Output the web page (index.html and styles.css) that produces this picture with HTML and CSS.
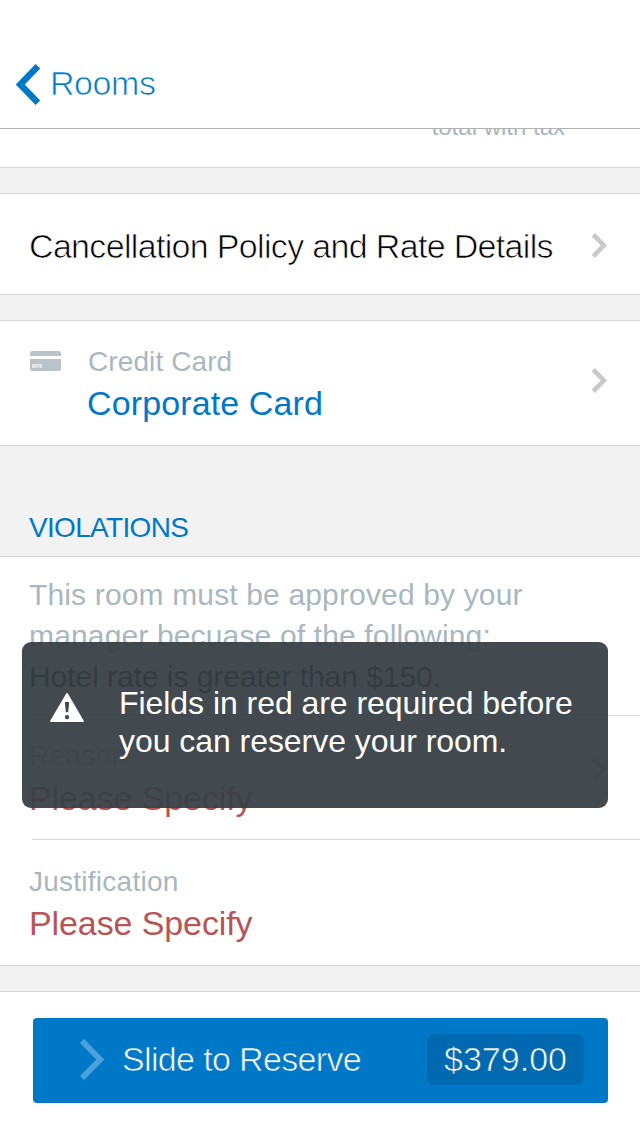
FILE: index.html
```html
<!DOCTYPE html>
<html lang="en">
<head>
<meta charset="utf-8">
<title>Reserve Room</title>
<link rel="stylesheet" href="styles.css">
</head>
<body>
<div class="screen">
  <header class="nav">
    <svg class="back" viewBox="0 0 24 41"><path d="M21.900 2.300 4.300 20.500 21.900 38.700" fill="none" stroke="#0078c8" stroke-width="6.400"/></svg>
    <span class="nav-title light">Rooms</span>
  </header>
  <section class="summary"><span>total with tax</span></section>
  <section class="card policy">
    <span class="policy-text light">Cancellation Policy and Rate Details</span>
    <svg class="chevron" viewBox="0 0 16 25"><path d="M1.300 1.700 11.900 12.500 1.300 23.300" fill="none" stroke="#c9c9c9" stroke-width="4.600"/></svg>
  </section>
  <section class="card payment">
    <svg class="cc" viewBox="0 0 31 20"><path d="M0 5V2.500Q0 0 2.500 0h26Q31 0 31 2.500V5zM0 8h31v9.500q0 2.500-2.500 2.500h-26Q0 20 0 17.500z" fill="#bac3ca"/><path d="M2 13h10v4H9.500v-1.500h-1V17h-1v-1.500h-1V17H2z" fill="#e2e6e9"/></svg>
    <div class="field">
      <div class="label">Credit Card</div>
      <div class="value link">Corporate Card</div>
    </div>
    <svg class="chevron" viewBox="0 0 16 25"><path d="M1.300 1.700 11.900 12.500 1.300 23.300" fill="none" stroke="#c9c9c9" stroke-width="4.600"/></svg>
  </section>
  <h2 class="heading">VIOLATIONS</h2>
  <section class="card violations">
    <p class="notice">This room must be approved by your<br>manager becuase of the following:<br><span class="rule">Hotel rate is greater than $150.</span></p>
    <div class="row reason">
      <div class="field">
        <div class="label">Reason</div>
        <div class="value required">Please Specify</div>
      </div>
      <svg class="chevron" viewBox="0 0 16 25"><path d="M1.300 1.700 11.900 12.500 1.300 23.300" fill="none" stroke="#c9c9c9" stroke-width="4.600"/></svg>
    </div>
    <div class="row justification">
      <div class="field">
        <div class="label">Justification</div>
        <div class="value required">Please Specify</div>
      </div>
    </div>
  </section>
  <footer class="footer">
    <div class="slide">
      <svg class="slide-arrow" viewBox="0 0 25 41"><path d="M2 2 20.200 20.500 2 39" fill="none" stroke="#4ca1db" stroke-width="5.800"/></svg>
      <span class="slide-text light">Slide to Reserve</span>
      <span class="price light">$379.00</span>
    </div>
  </footer>
  <div class="toast">
    <svg class="warn" viewBox="0 0 34 29"><path fill-rule="evenodd" fill="#fff" d="M16.200.5Q17-.5 17.800.5L33.900 28q.2 1-.8 1H.900q-1 0-.8-1zM14.800 9l1 10.300h2.400L19.200 9zM17 22a2.100 2.100 0 1 0 .01 0z"/></svg>
    <p class="toast-text">Fields in red are required before<br>you can reserve your room.</p>
  </div>
</div>
</body>
</html>
```
FILE: styles.css
```css
* { box-sizing: border-box; }
body {
  margin: 0;
  background: #fff;
  font-family: "Liberation Sans", Arial, sans-serif;
  font-size: 34px;
}
h2, p { margin: 0; font-weight: normal; }
svg { display: block; flex: none; }
.screen {
  position: relative;
  width: 640px;
  height: 1135px;
  overflow: hidden;
  background: #f2f2f2;
  white-space: nowrap;
}
/* Thins the glyphs by stroking their edges in the surface colour */
.light { -webkit-text-stroke: 0.7px var(--surface, #fff); }

.nav {
  display: flex;
  align-items: flex-start;
  height: 129px;
  padding: 63px 0 0 16px;
  background: #fff;
  border-bottom: 1px solid #b2b2b2;
}
.back { width: 24px; height: 41px; margin-top: 1px; }
.nav-title {
  margin-left: 10px;
  line-height: 40px;
  letter-spacing: -0.45px;
  color: #0078c8;
}
.summary {
  height: 39px;
  padding-right: 75px;
  overflow: hidden;
  background: #fff;
  border-bottom: 1px solid #d6d7d8;
  text-align: right;
  color: #a8b7c1;
  font-size: 24px;
  line-height: 24px;
}
.summary span { display: block; margin-top: -14px; }
.card {
  background: #fff;
  border: solid #d6d7d8;
  border-width: 1px 0;
}
.chevron { width: 16px; height: 25px; margin: 0 32px 0 auto; }
.policy {
  display: flex;
  align-items: center;
  height: 102px;
  margin-top: 25px;
  padding: 3px 0 0 29px;
}
.policy-text { padding-top: 2px; letter-spacing: -0.67px; color: #000; }
.payment {
  display: flex;
  height: 126px;
  margin-top: 25px;
  padding: 20px 0 0 30px;
}
.payment .chevron { margin-top: 27px; }
.cc { width: 31px; height: 20px; margin-top: 10px; }
.payment .field { margin-left: 26px; }
.payment .label { padding-left: 1px; letter-spacing: 0.1px; }
.label {
  color: #a8b7c1;
  font-size: 28px;
  line-height: 42px;
  letter-spacing: 0.25px;
}
.value { line-height: 42px; }
.payment .value { line-height: 41px; }
.link { color: #0078c8; letter-spacing: 0.12px; }
.required { color: #b95456; letter-spacing: -0.1px; }
.heading {
  height: 110px;
  padding: 65px 0 0 29px;
  color: #0078c8;
  font-size: 28px;
  line-height: 34px;
  letter-spacing: -0.68px;
}
.violations { height: 410px; }
.notice {
  height: 158px;
  padding: 17px 0 0 29px;
  color: #a8b7c1;
  font-size: 30px;
  line-height: 41px;
  letter-spacing: 0.15px;
}
.rule { color: #000; letter-spacing: -0.05px; }
.row {
  display: flex;
  margin-left: 32px;
  border-top: 1px solid #d6d7d8;
}
.row .field { margin-left: -3px; }
.reason { height: 124px; padding-top: 19px; }
.reason .chevron { margin-top: 22px; }
.justification { padding-top: 21px; }
.justification .value { line-height: 41px; }
.footer {
  height: 144px;
  margin-top: 25px;
  padding: 26px 32px 0 33px;
  background: #fff;
  border-top: 1px solid #d6d7d8;
}
.slide {
  --surface: #0078c8;
  display: flex;
  align-items: center;
  height: 85px;
  padding: 0 24px 2px 47px;
  border-radius: 4px;
  background: #0078c8;
  color: #fff;
}
.slide-arrow { width: 25px; height: 41px; }
.slide-text { margin-left: 17px; letter-spacing: -0.65px; }
.price {
  --surface: #0069af;
  width: 157px;
  height: 51px;
  margin-left: auto;
  border-radius: 8px;
  background: #0069af;
  line-height: 51px;
  text-align: center;
}
/* Alert floating above the form */
.toast {
  position: absolute;
  left: 22px;
  top: 642px;
  display: flex;
  width: 586px;
  height: 166px;
  padding: 42px 0 0 28px;
  border-radius: 9px;
  background: rgba(56, 63, 69, 0.945);
  color: #fff;
}
.warn { width: 34px; height: 29px; margin-top: 9px; }
.toast-text { margin-left: 35px; font-size: 32px; line-height: 38px; letter-spacing: -0.05px; }
```
